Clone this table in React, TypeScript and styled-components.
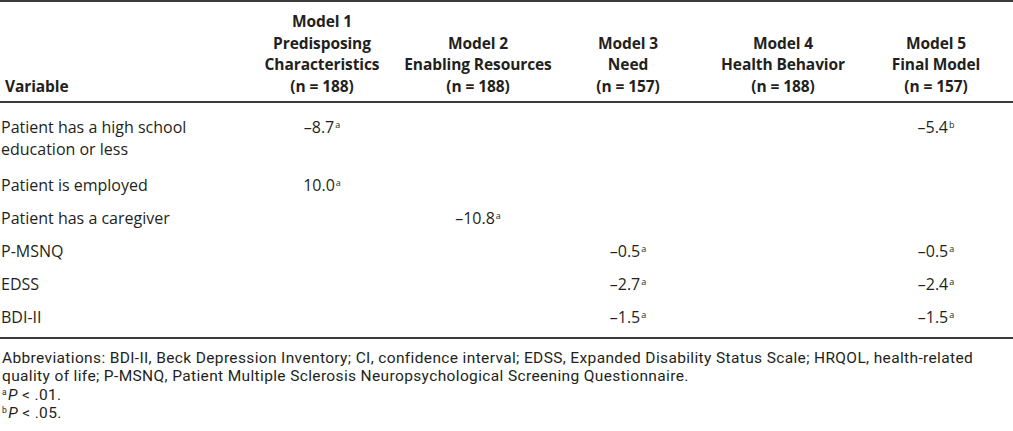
import React from 'react';
import styled, { createGlobalStyle } from 'styled-components';

const GlobalStyle = createGlobalStyle`
  html, body {
    margin: 0;
    padding: 0;
    background: #ffffff;
  }
  body {
    font-family: "Open Sans", "Liberation Sans", sans-serif;
    color: #231f20;
  }
`;

const Page = styled.div`
  width: 1013px;
  height: 431px;
  overflow: hidden;
  background: #ffffff;
`;

const Table = styled.table`
  width: 100%;
  border-collapse: collapse;
  table-layout: fixed;
`;

const Head = styled.thead`
  border-top: 2px solid #3c3c3c;
  border-bottom: 2px solid #3c3c3c;
`;

const HeadCell = styled.th<{ $left?: boolean }>`
  font-weight: 700;
  font-size: 15.5px;
  line-height: 21.5px;
  letter-spacing: -0.1px;
  text-align: ${p => (p.$left ? 'left' : 'center')};
  vertical-align: bottom;
  padding: 9px 0 4px ${p => (p.$left ? '5px' : '0')};
`;

const Body = styled.tbody`
  border-bottom: 2px solid #3c3c3c;
`;

const Row = styled.tr<{ $first?: boolean; $last?: boolean }>`
  & > td {
    padding-top: ${p => (p.$first ? '13px' : '6px')};
    padding-bottom: ${p => (p.$last ? '9px' : p.$first ? '8px' : '5px')};
  }
`;

const LabelCell = styled.td`
  font-size: 16px;
  line-height: 22px;
  text-align: left;
  vertical-align: top;
  padding-left: 1px;
`;

const ValueCell = styled.td`
  font-size: 16px;
  line-height: 22px;
  text-align: center;
  vertical-align: top;
`;

const Sup = styled.sup`
  font-size: 9px;
  line-height: 0;
  vertical-align: 5px;
  margin-left: 1px;
`;

const Notes = styled.div`
  padding: 10px 0 0 2px;
  font-family: Roboto, "Open Sans", sans-serif;
  font-size: 15.5px;
  line-height: 18.3px;
  letter-spacing: 0.36px;
`;

const NoteLine = styled.div`
  white-space: nowrap;
`;

const NoteMark = styled.sup`
  font-size: 8.5px;
  line-height: 0;
  vertical-align: 5px;
  margin-right: 1px;
`;

const Italic = styled.i`
  font-style: italic;
`;

type Value = { v: string; mark: string } | null;

const columns = [
  { title: ['Model 1', 'Predisposing', 'Characteristics'], n: '188', width: 156 },
  { title: ['Model 2', 'Enabling Resources'], n: '188', width: 156 },
  { title: ['Model 3', 'Need'], n: '157', width: 144 },
  { title: ['Model 4', 'Health Behavior'], n: '188', width: 166 },
  { title: ['Model 5', 'Final Model'], n: '157', width: 140 },
];

const rows: { label: React.ReactNode; values: Value[] }[] = [
  {
    label: (
      <>
        Patient has a high school
        <br />
        education or less
      </>
    ),
    values: [{ v: '–8.7', mark: 'a' }, null, null, null, { v: '–5.4', mark: 'b' }],
  },
  { label: 'Patient is employed', values: [{ v: '10.0', mark: 'a' }, null, null, null, null] },
  { label: 'Patient has a caregiver', values: [null, { v: '–10.8', mark: 'a' }, null, null, null] },
  { label: 'P-MSNQ', values: [null, null, { v: '–0.5', mark: 'a' }, null, { v: '–0.5', mark: 'a' }] },
  { label: 'EDSS', values: [null, null, { v: '–2.7', mark: 'a' }, null, { v: '–2.4', mark: 'a' }] },
  { label: 'BDI-II', values: [null, null, { v: '–1.5', mark: 'a' }, null, { v: '–1.5', mark: 'a' }] },
];

const App: React.FC = () => {
  return (
    <Page>
      <GlobalStyle />
      <Table>
        <colgroup>
          <col style={{ width: 244 }} />
          {columns.map((c, i) => (
            <col key={i} style={{ width: c.width }} />
          ))}
          <col />
        </colgroup>
        <Head>
          <tr>
            <HeadCell $left>Variable</HeadCell>
            {columns.map((c, i) => (
              <HeadCell key={i}>
                {c.title.map(t => (
                  <div key={t}>{t}</div>
                ))}
                <div>(n = {c.n})</div>
              </HeadCell>
            ))}
            <HeadCell />
          </tr>
        </Head>
        <Body>
          {rows.map((r, i) => (
            <Row key={i} $first={i === 0} $last={i === rows.length - 1}>
              <LabelCell>{r.label}</LabelCell>
              {r.values.map((val, j) => (
                <ValueCell key={j}>
                  {val && (
                    <>
                      {val.v}
                      <Sup>{val.mark}</Sup>
                    </>
                  )}
                </ValueCell>
              ))}
              <ValueCell />
            </Row>
          ))}
        </Body>
      </Table>
      <Notes>
        <NoteLine>
          Abbreviations: BDI-II, Beck Depression Inventory; CI, confidence interval; EDSS, Expanded Disability Status
          Scale; HRQOL, health-related
        </NoteLine>
        <NoteLine>quality of life; P-MSNQ, Patient Multiple Sclerosis Neuropsychological Screening Questionnaire.</NoteLine>
        <NoteLine>
          <NoteMark>a</NoteMark>
          <Italic>P</Italic> &lt; .01.
        </NoteLine>
        <NoteLine>
          <NoteMark>b</NoteMark>
          <Italic>P</Italic> &lt; .05.
        </NoteLine>
      </Notes>
    </Page>
  );
};

export default App;
